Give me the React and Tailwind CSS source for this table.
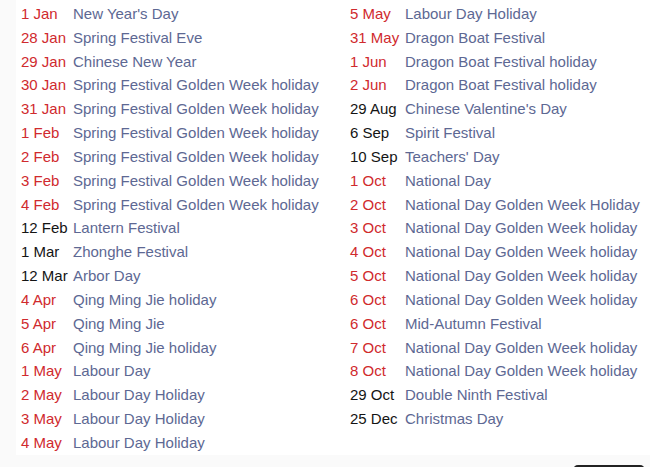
import React from 'react';

const LEFT = [
  ['1 Jan', "New Year's Day", 'r'],
  ['28 Jan', 'Spring Festival Eve', 'r'],
  ['29 Jan', 'Chinese New Year', 'r'],
  ['30 Jan', 'Spring Festival Golden Week holiday', 'r'],
  ['31 Jan', 'Spring Festival Golden Week holiday', 'r'],
  ['1 Feb', 'Spring Festival Golden Week holiday', 'r'],
  ['2 Feb', 'Spring Festival Golden Week holiday', 'r'],
  ['3 Feb', 'Spring Festival Golden Week holiday', 'r'],
  ['4 Feb', 'Spring Festival Golden Week holiday', 'r'],
  ['12 Feb', 'Lantern Festival', 'k'],
  ['1 Mar', 'Zhonghe Festival', 'k'],
  ['12 Mar', 'Arbor Day', 'k'],
  ['4 Apr', 'Qing Ming Jie holiday', 'r'],
  ['5 Apr', 'Qing Ming Jie', 'r'],
  ['6 Apr', 'Qing Ming Jie holiday', 'r'],
  ['1 May', 'Labour Day', 'r'],
  ['2 May', 'Labour Day Holiday', 'r'],
  ['3 May', 'Labour Day Holiday', 'r'],
  ['4 May', 'Labour Day Holiday', 'r'],
];

const RIGHT = [
  ['5 May', 'Labour Day Holiday', 'r'],
  ['31 May', 'Dragon Boat Festival', 'r'],
  ['1 Jun', 'Dragon Boat Festival holiday', 'r'],
  ['2 Jun', 'Dragon Boat Festival holiday', 'r'],
  ['29 Aug', "Chinese Valentine's Day", 'k'],
  ['6 Sep', 'Spirit Festival', 'k'],
  ['10 Sep', "Teachers' Day", 'k'],
  ['1 Oct', 'National Day', 'r'],
  ['2 Oct', 'National Day Golden Week Holiday', 'r'],
  ['3 Oct', 'National Day Golden Week holiday', 'r'],
  ['4 Oct', 'National Day Golden Week holiday', 'r'],
  ['5 Oct', 'National Day Golden Week holiday', 'r'],
  ['6 Oct', 'National Day Golden Week holiday', 'r'],
  ['6 Oct', 'Mid-Autumn Festival', 'r'],
  ['7 Oct', 'National Day Golden Week holiday', 'r'],
  ['8 Oct', 'National Day Golden Week holiday', 'r'],
  ['29 Oct', 'Double Ninth Festival', 'k'],
  ['25 Dec', 'Christmas Day', 'k'],
];

// one column of date / holiday rows
const HolidayList = ({ rows, dateWidth }) => (
  <div className="flex flex-col">
    {rows.map(([date, name, tone], i) => (
      <div key={i} className="flex h-[23.83px] leading-[23.83px] whitespace-nowrap">
        <span
          className={`${dateWidth} shrink-0 ${tone === 'r' ? 'text-[#d02a2e]' : 'text-[#141414]'}`}
        >
          {date}
        </span>
        <span className="text-[#5d6893]">{name}</span>
      </div>
    ))}
  </div>
);

const App = () => {
  return (
    <div className="h-[467px] overflow-hidden bg-[#fafafa] font-['Liberation_Sans',Arial,sans-serif] text-[15px]">
      <div className="ml-[16px] bg-white h-[455px] pt-[2px] pl-[5px] flex">
        <div className="w-[329px]">
          <HolidayList rows={LEFT} dateWidth="w-[52px]" />
        </div>
        <HolidayList rows={RIGHT} dateWidth="w-[55px]" />
      </div>
      <div className="flex justify-end pr-[5px] pt-[10px]">
        <button className="w-[72px] h-[30px] rounded-[5px] border-2 border-[#222222] bg-white"></button>
      </div>
    </div>
  );
};

export default App;
